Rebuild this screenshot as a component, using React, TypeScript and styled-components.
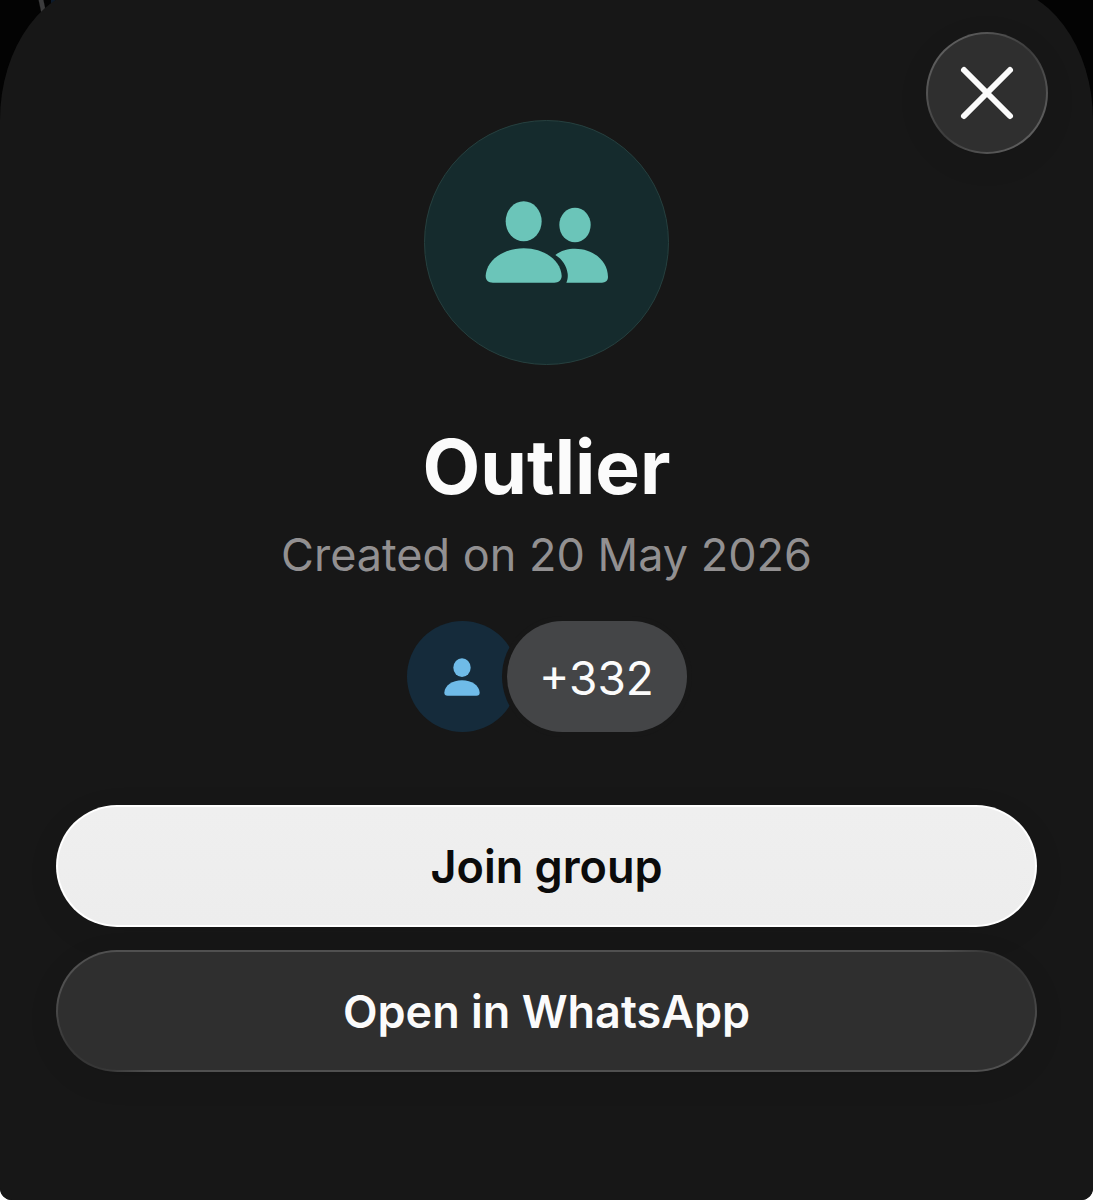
import React from "react";
import styled, { createGlobalStyle, css } from "styled-components";

const surface = "#171717";

const GlobalStyle = createGlobalStyle`
  *, *::before, *::after { box-sizing: border-box; }
  body {
    margin: 0;
    background: #ffffff;
    font-family: Inter, "Liberation Sans", sans-serif;
  }
`;

const Backdrop = styled.div`
  display: flex;
  flex-direction: column;
  min-height: 100vh;
  overflow: hidden;
  border-radius: 0 0 12px 12px;
  background:
    linear-gradient(78deg, transparent 25%, #3c3c3d 35%, #3c3c3d 65%, transparent 75%) 38px 0 / 9px 14px no-repeat,
    linear-gradient(#0d1b2c, #0d1b2c) 51px 0 / 4px 8px no-repeat,
    #030303;
`;

const Sheet = styled.main`
  position: relative;
  flex: 1;
  display: flex;
  flex-direction: column;
  align-items: center;
  margin-top: -14px;
  padding: 134px 56px 128px;
  border-radius: 100px 100px 0 0 / 134px 134px 0 0;
  background: ${surface};
`;

const glass = css`
  border: 2px solid transparent;
  box-shadow: 0 8px 32px rgba(0, 0, 0, 0.08);
`;

const CloseButton = styled.button`
  ${glass}
  position: absolute;
  top: 46px;
  right: 45px;
  display: grid;
  place-items: center;
  width: 122px;
  height: 122px;
  padding: 0;
  border-radius: 50%;
  background:
    linear-gradient(#2f2f2f, #2f2f2f) padding-box,
    linear-gradient(135deg, #606060 12%, #3c3c3c 50%, #606060 88%) border-box;
  cursor: pointer;
`;

const GroupAvatar = styled.div`
  display: grid;
  place-items: center;
  width: 245px;
  height: 245px;
  border: 1px solid #26403f;
  border-radius: 50%;
  background: #152b2d;
`;

const Title = styled.h1`
  margin: 56px 0 0;
  color: #fbfbfb;
  font-size: 75px;
  font-weight: 700;
  line-height: 92px;
`;

const Subtitle = styled.p`
  margin: 14px 0 0;
  color: #929091;
  font-size: 45px;
  line-height: 56px;
`;

const Members = styled.div`
  display: flex;
  margin-top: 38px;
`;

const MemberAvatar = styled.div`
  display: grid;
  place-items: center;
  width: 111px;
  height: 111px;
  border-radius: 50%;
  background: #152b3b;
`;

const MemberCount = styled.div`
  z-index: 1;
  display: grid;
  place-items: center;
  width: 180px;
  height: 111px;
  margin-left: -11px;
  padding-top: 2px;
  border-radius: 56px;
  background: #444547;
  box-shadow: 0 0 0 5px ${surface};
  color: #fbfbfb;
  font-size: 46px;
  line-height: 56px;
`;

const Actions = styled.div`
  display: flex;
  flex-direction: column;
  gap: 23px;
  width: 100%;
  margin-top: 73px;
`;

const ActionButton = styled.button<{ $primary?: boolean }>`
  ${glass}
  width: 100%;
  height: 122px;
  padding: 2px 32px 0;
  border-radius: 61px;
  color: ${(p) => (p.$primary ? "#0b0b0b" : "#fbfbfb")};
  background: ${(p) =>
    p.$primary
      ? "linear-gradient(#efefef, #ededed) padding-box, linear-gradient(#ffffff, #ffffff) border-box"
      : `linear-gradient(#2f2f2f, #2f2f2f) padding-box,
         radial-gradient(circle at 97% 12%, #363636 20px, transparent 70px) border-box,
         radial-gradient(circle at 3% 88%, #363636 20px, transparent 70px) border-box,
         linear-gradient(#505050, #505050) border-box`};
  font-family: inherit;
  font-size: 45px;
  font-weight: 600;
  line-height: 56px;
  cursor: pointer;
`;

const CloseIcon = () => (
  <svg width="56" height="56" viewBox="0 0 56 56" fill="none" stroke="#fbfbfb" strokeWidth="6" strokeLinecap="round" aria-hidden="true">
    <path d="M5 5 51 51M51 5 5 51" />
  </svg>
);

const GroupIcon = () => (
  <svg width="124" height="84" viewBox="210 272 372 252" fill="#6bc5b9" aria-hidden="true">
    <ellipse cx="326" cy="333" rx="54" ry="60" />
    <ellipse cx="480" cy="344" rx="47" ry="52" />
    <path d="M234 517C220 517 212 510 212 497C214 450 264 414 326 414C388 414 438 450 440 497C440 510 430 517 418 517Z" />
    <path d="M421 434C437 420 460 415 480 415C535 415 579 452 579 500C579 511 571 517 561 517H454C458 508 459 498 458 490C455 466 442 447 421 434Z" />
  </svg>
);

const PersonIcon = () => (
  <svg width="38" height="40" viewBox="146 139 114 120" fill="#6fbbe8" aria-hidden="true">
    <ellipse cx="203" cy="171" rx="26" ry="28" />
    <path d="M160 255C153 255 150 251 150 246C151 225 174 209 203 209C232 209 255 225 256 246C256 251 253 255 246 255Z" />
  </svg>
);

export default function App() {
  return (
    <>
      <GlobalStyle />
      <Backdrop>
        <Sheet>
          <CloseButton type="button" aria-label="Close">
            <CloseIcon />
          </CloseButton>
          <GroupAvatar>
            <GroupIcon />
          </GroupAvatar>
          <Title>Outlier</Title>
          <Subtitle>Created on 20 May 2026</Subtitle>
          <Members>
            <MemberAvatar>
              <PersonIcon />
            </MemberAvatar>
            <MemberCount>+332</MemberCount>
          </Members>
          <Actions>
            <ActionButton type="button" $primary>
              Join group
            </ActionButton>
            <ActionButton type="button">Open in WhatsApp</ActionButton>
          </Actions>
        </Sheet>
      </Backdrop>
    </>
  );
}
